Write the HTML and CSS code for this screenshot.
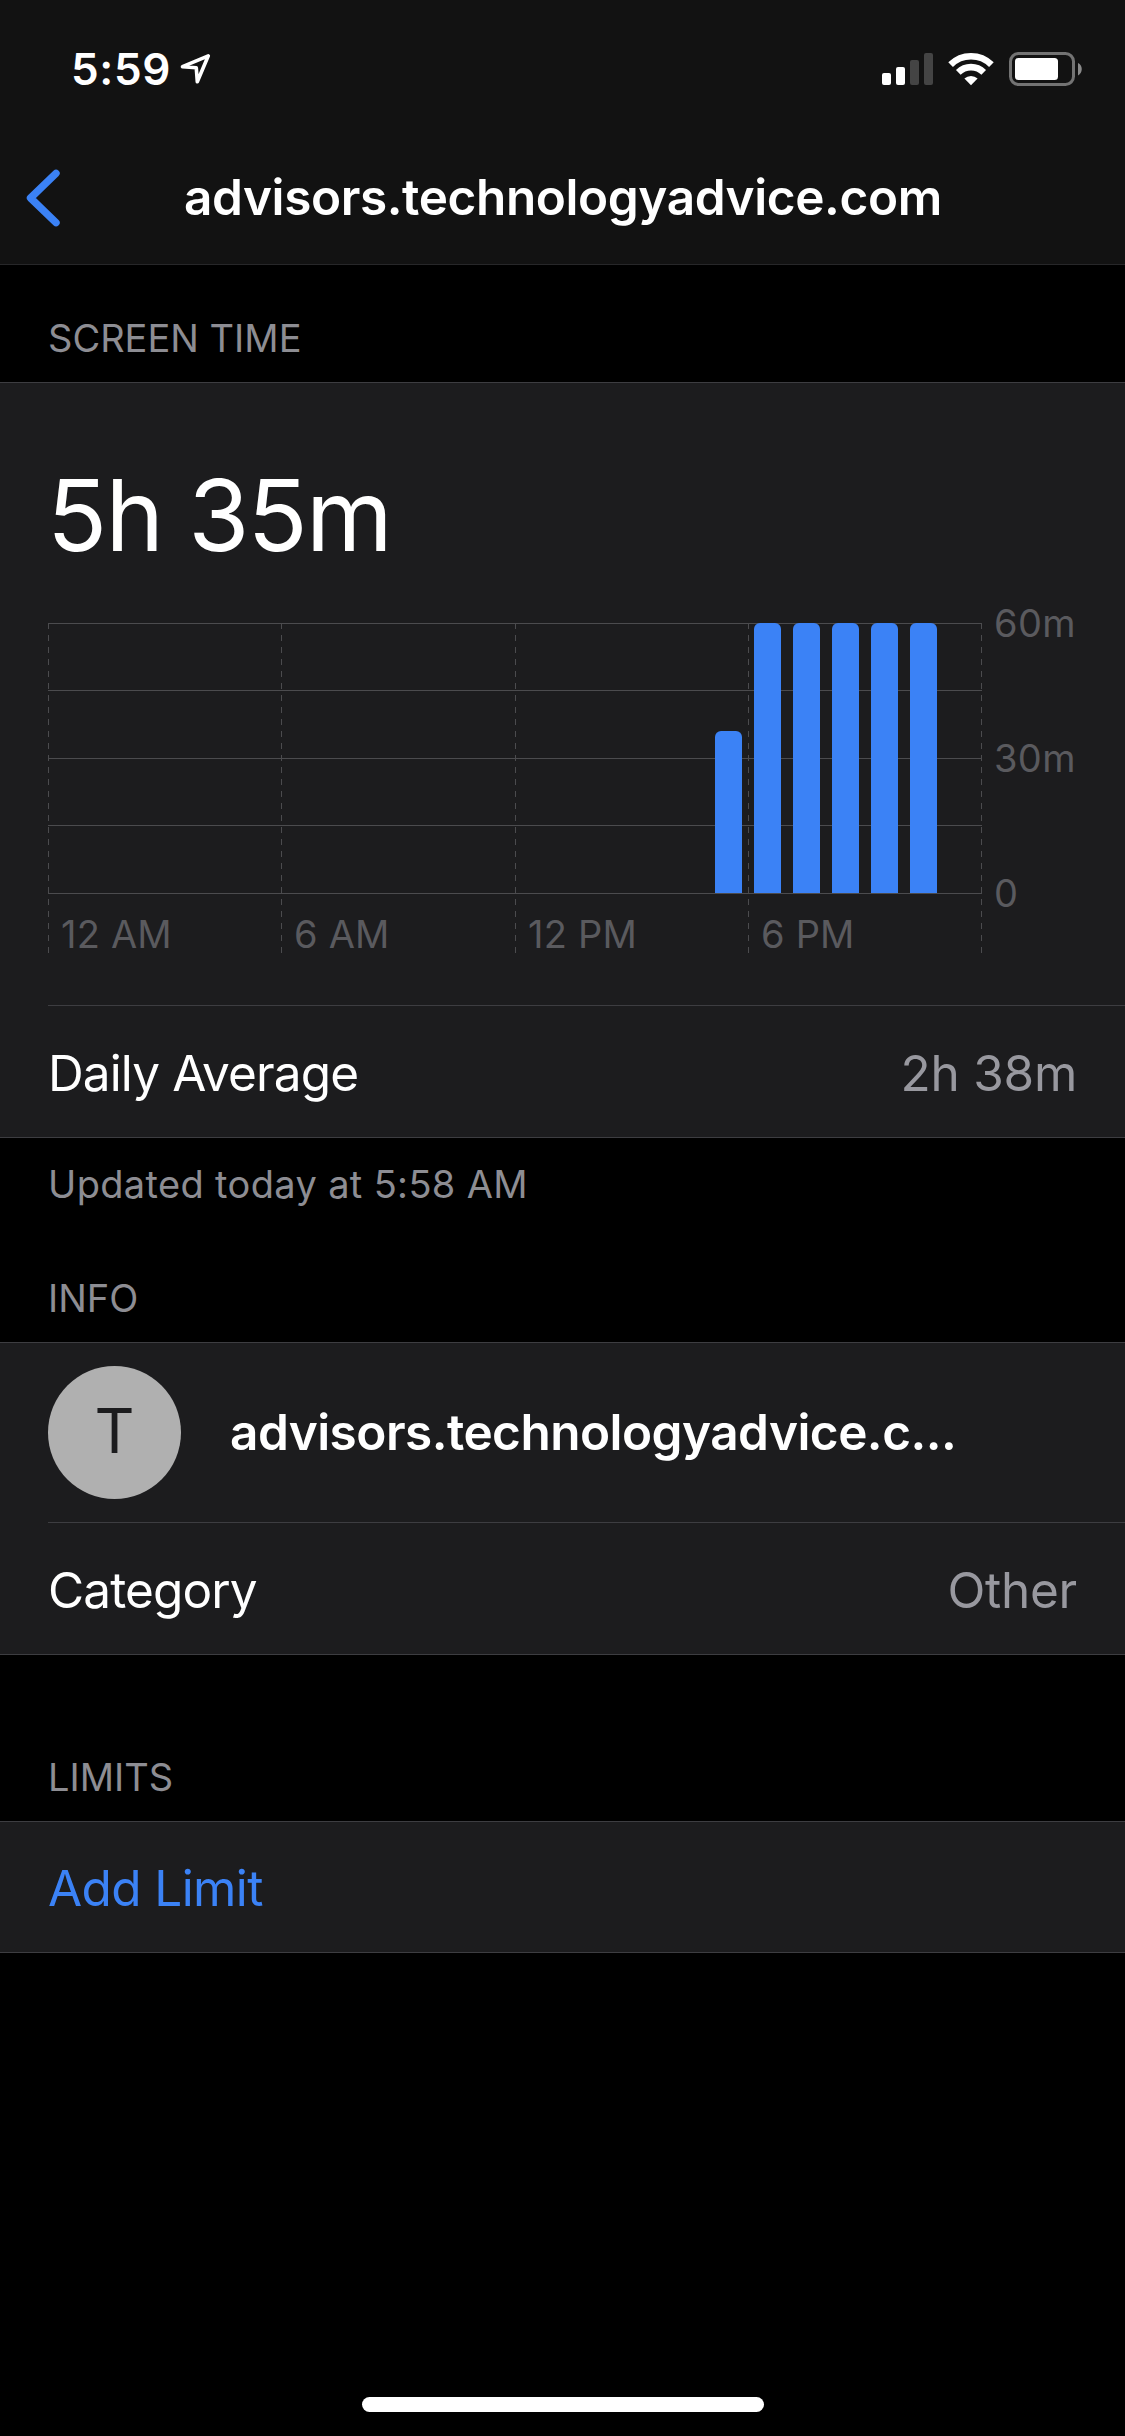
FILE: index.html
```html
<!DOCTYPE html>
<html lang="en">
<head>
<meta charset="utf-8">
<title>Screen Time</title>
<link rel="stylesheet" href="styles.css">
</head>
<body>
<div class="screen">
  <header class="header">
    <div class="status">
      <div class="status-left">
        <span class="clock">5:59</span>
        <svg class="location" width="32" height="32" viewBox="0 0 32 32"><path d="M29.3 2.8 3.5 13.7 17.3 14.800 18.300 28.800Z" fill="none" stroke="#fff" stroke-width="3.6" stroke-linejoin="round"/></svg>
      </div>
      <div class="status-right">
        <svg width="51" height="34" viewBox="0 0 51 34" fill="#fff"><rect x="0" y="21" width="9" height="12" rx="2"/><rect x="14" y="15" width="9" height="18" rx="2"/><g fill="#444"><rect x="28" y="8" width="9" height="25" rx="2"/><rect x="42" y="1" width="9" height="32" rx="2"/></g></svg>
        <svg class="wifi" width="46" height="34" viewBox="0 0 46 34"><g fill="none" stroke="#fff" stroke-width="6.6"><path d="M2.6 12.6a29 29 0 0 1 40.8 0"/><path d="M10.3 20.4a18 18 0 0 1 25.4 0"/></g><path d="M16.4 26.6a9.4 9.4 0 0 1 13.2 0L23 33.2Z" fill="#fff"/></svg>
        <svg class="battery" width="74" height="34" viewBox="0 0 74 34"><rect x="1.5" y="1.5" width="63" height="31" rx="8" fill="none" stroke="#737373" stroke-width="3"/><rect x="6" y="6" width="43" height="22" rx="3.5" fill="#fff"/><path d="M69 11c5 2.4 5 10 0 12.4Z" fill="#8a8a8a"/></svg>
      </div>
    </div>
    <div class="nav">
      <svg class="back" width="34" height="58" viewBox="0 0 34 58"><path d="M30 4.3 4.5 29 30 53.7" fill="none" stroke="#3b82f6" stroke-width="7.4" stroke-linecap="round" stroke-linejoin="round"/></svg>
      <h1 class="title">advisors.technologyadvice.com</h1>
    </div>
  </header>

  <h2 class="section-title">SCREEN TIME</h2>
  <section class="group">
    <div class="usage">
      <div class="total">5h 35m</div>
      <div class="chart">
        <svg class="gridlines" width="934" height="330" viewBox="0 0 934 330">
          <g stroke="#4b4b4e" stroke-width="1"><path d="M0 .5H934M0 67.5H934M0 135.5H934M0 202.5H934M0 270.5H934"/><path stroke-dasharray="6 6" d="M.5 0V330M233.5 0V330M467.5 0V330M700.5 0V330M933.5 0V330"/></g>
        </svg>
        <div class="bars">
          <div class="bar" style="height:60%"></div>
          <div class="bar" style="height:100%"></div>
          <div class="bar" style="height:100%"></div>
          <div class="bar" style="height:100%"></div>
          <div class="bar" style="height:100%"></div>
          <div class="bar" style="height:100%"></div>
        </div>
        <div class="hours"><span>12 AM</span><span>6 AM</span><span>12 PM</span><span>6 PM</span></div>
        <div class="minutes"><span>60m</span><span>30m</span><span>0</span></div>
      </div>
    </div>
    <div class="row"><span class="label">Daily Average</span><span class="value">2h 38m</span></div>
  </section>
  <p class="footnote">Updated today at 5:58 AM</p>

  <h2 class="section-title info">INFO</h2>
  <section class="group">
    <div class="site">
      <div class="avatar">T</div>
      <div class="site-name">advisors.technologyadvice.c...</div>
    </div>
    <div class="row"><span class="label">Category</span><span class="value">Other</span></div>
  </section>

  <h2 class="section-title limits">LIMITS</h2>
  <section class="group">
    <div class="row add"><a class="link">Add Limit</a></div>
  </section>
  <div class="home"></div>
</div>
</body>
</html>
```
FILE: styles.css
```css
* { box-sizing: border-box; }
body {
  margin: 0;
  background: #000;
  color: #fff;
  font-family: Inter, "Liberation Sans", sans-serif;
  font-size: 49.5px;
  font-weight: 400;
}
h1, h2, p { margin: 0; font-weight: 400; }
svg { display: block; flex: none; }
.screen { width: 1125px; height: 2436px; display: flex; flex-direction: column; overflow: hidden; }

/* Status bar and navigation */
.header { height: 265px; flex: none; background: #121212; border-bottom: 1px solid #272729; }
.status { height: 132px; display: flex; justify-content: space-between; padding: 52px 43px 0 71px; }
.status-left { display: flex; height: 34px; align-items: center; gap: 8px; }
.clock { font-size: 44px; font-weight: 600; line-height: 34px; letter-spacing: 0.6px; }
.status-right { display: flex; height: 34px; }
.wifi { margin-left: 15px; }
.battery { margin-left: 15px; margin-right: -1px; }
.nav { height: 132px; display: flex; align-items: center; padding-left: 26px; }
.back { margin-right: 124px; }
.title { font-size: 49.5px; font-weight: 600; line-height: 60px; padding-bottom: 2px; white-space: nowrap; letter-spacing: -0.4px; }

/* Grouped list */
.section-title { height: 117px; flex: none; padding: 48px 0 0 48px; font-size: 38px; line-height: 50px; color: #8d8d93; }
.info { height: 113px; padding-top: 44px; }
.limits { height: 166px; padding-top: 97px; }
.group { flex: none; background: #1c1c1e; border-top: 1px solid #3d3d41; border-bottom: 1px solid #3d3d41; }
.row { height: 132px; margin-left: 48px; padding: 3px 48px 0 0; border-top: 1px solid #3d3d41; display: flex; align-items: center; justify-content: space-between; line-height: 60px; }
.add { border-top: 0; height: 130px; padding-top: 1px; }
.label { letter-spacing: -0.88px; }
.value { color: #98989f; letter-spacing: -0.25px; }
.link { color: #3b82f6; letter-spacing: -0.6px; }
.footnote { height: 91px; flex: none; padding: 20px 0 0 48px; font-size: 38px; line-height: 52px; color: #8d8d93; letter-spacing: 0.35px; }

/* Usage chart */
.usage { height: 622px; padding: 82px 0 0 48px; }
.total { font-size: 99px; line-height: 100px; height: 158px; margin-left: -1px; letter-spacing: -1.8px; }
.chart { display: grid; grid-template: 270px 60px / 934px 143px; }
.gridlines { grid-area: 1 / 1 / 3 / 2; }
.bars { grid-area: 1 / 1; display: flex; align-items: flex-end; gap: 12px; padding-left: 667px; }
.bar { width: 27px; background: #3b82f6; border-radius: 6px 6px 0 0; }
.hours { grid-area: 2 / 1; display: grid; grid-template-columns: 233px 234px 233px 234px; padding-top: 16px; font-size: 38px; line-height: 50px; color: #5a5a5e; }
.hours span { padding-left: 13px; letter-spacing: 0.2px; }
.minutes { grid-area: 1 / 2; display: flex; flex-direction: column; justify-content: space-between; margin: -25px 0; padding-left: 12px; font-size: 38px; line-height: 50px; color: #5a5a5e; letter-spacing: 0.4px; }

/* Website details */
.site { height: 179px; padding-left: 48px; display: flex; align-items: center; }
.avatar { width: 133px; height: 133px; border-radius: 50%; background: #b0b0b0; color: #1c1c1e; display: flex; align-items: center; justify-content: center; padding-bottom: 4px; font-size: 62px; line-height: 70px; }
.site-name { margin-left: 49px; padding-bottom: 1px; font-weight: 600; line-height: 60px; letter-spacing: -0.53px; }
.home { width: 402px; height: 15px; border-radius: 8px; background: #fff; margin: auto auto 24px 362px; flex: none; }
```
